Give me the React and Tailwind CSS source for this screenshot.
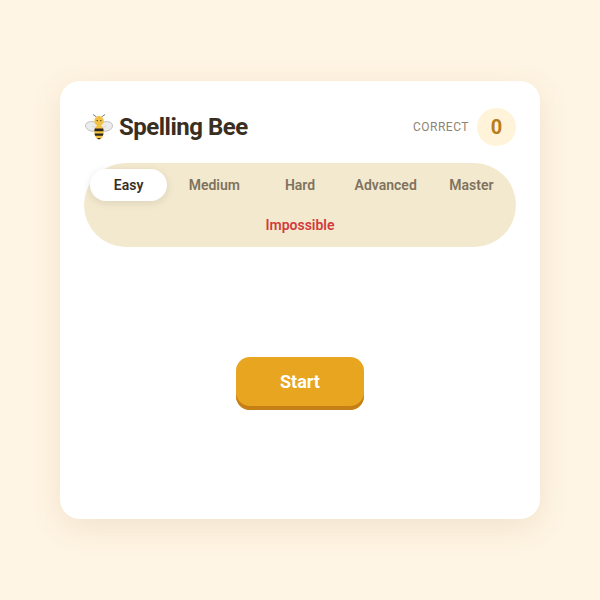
const tabs = ["Easy", "Medium", "Hard", "Advanced", "Master", "Impossible"];

function Bee() {
  return (
    <svg width="28" height="28" viewBox="0 0 28 28" aria-hidden="true">
      <path d="M11.5 4 L8 1.5" stroke="#6b6b6b" strokeWidth="0.9" fill="none" />
      <path d="M16.5 4 L20 1.5" stroke="#6b6b6b" strokeWidth="0.9" fill="none" />
      <ellipse cx="7.2" cy="13.4" rx="6.8" ry="4.8" fill="#ececec" stroke="#b0b0b0" strokeWidth="0.7" transform="rotate(12 7.2 13.4)" />
      <ellipse cx="20.8" cy="13.4" rx="6.8" ry="4.8" fill="#ececec" stroke="#b0b0b0" strokeWidth="0.7" transform="rotate(-12 20.8 13.4)" />
      <path d="M7 13 L11 14.5 M21 13 L17 14.5" stroke="#c4c4c4" strokeWidth="0.5" />
      <ellipse cx="14" cy="19" rx="4.6" ry="7.4" fill="#f3c542" />
      <path d="M9.7 15.6 H18.3 L18.6 18.2 H9.4 Z" fill="#2b2520" />
      <path d="M9.5 20.4 H18.5 L17.8 22.8 H10.2 Z" fill="#2b2520" />
      <path d="M11.9 25 H16.1 L14 26.6 Z" fill="#2b2520" />
      <circle cx="14" cy="7.8" r="4.8" fill="#f2c14a" />
      <circle cx="12.2" cy="7.6" r="0.7" fill="#3b2f1e" />
      <circle cx="15.8" cy="7.6" r="0.7" fill="#3b2f1e" />
    </svg>
  );
}

export default function App() {
  return (
    <div className="flex h-[600px] w-[600px] items-center justify-center bg-[#fff5e4] font-['Roboto',sans-serif]">
      <div className="flex h-[438px] w-[480px] flex-col rounded-[20px] bg-white px-6 pt-[27px] shadow-[0_8px_32px_rgba(140,100,30,0.12)]">
        <div className="flex h-[38px] items-center justify-between">
          <div className="flex items-center gap-[6px] pl-px">
            <Bee />
            <span className="text-[24px] font-bold tracking-[-0.5px] text-[#3a2e1f]">Spelling Bee</span>
          </div>
          <div className="flex items-center gap-2">
            <span className="text-[12px] tracking-[0.5px] text-[#8f8474]">CORRECT</span>
            <span className="flex h-[38px] w-[39px] items-center justify-center rounded-full bg-[#fff4d9] text-[20px] font-bold text-[#b97c1c]">0</span>
          </div>
        </div>
        <div className="mt-[17px] flex flex-wrap justify-center gap-x-[8.9px] gap-y-2 rounded-[42px] bg-[#f3e9ce] p-[6px]">
          {tabs.map((t) => (
            <button
              key={t}
              className={
                "h-[32px] w-[76.8px] whitespace-nowrap rounded-full text-[14px] font-semibold " +
                (t === "Easy"
                  ? "bg-white text-[#3a2e1f] shadow-[0_2px_8px_rgba(0,0,0,0.1)]"
                  : t === "Impossible"
                  ? "text-[#d13c3c]"
                  : "text-[#7f735f]")
              }
            >
              {t}
            </button>
          ))}
        </div>
        <div className="flex flex-1 items-center justify-center">
          <button className="h-[53px] w-[128px] rounded-[14px] bg-[#e8a520] pb-1 text-[18px] font-bold text-white shadow-[inset_0_-4px_0_#c47f17]">
            Start
          </button>
        </div>
      </div>
    </div>
  );
}
